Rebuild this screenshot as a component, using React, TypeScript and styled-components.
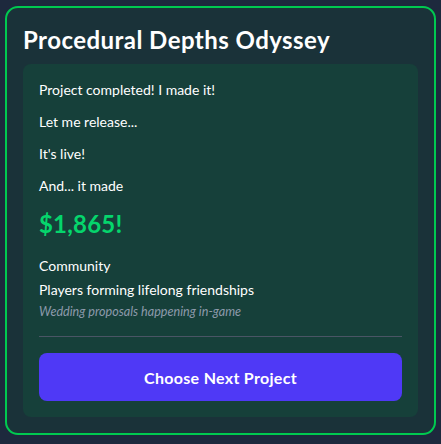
import React from "react";
import styled, { createGlobalStyle } from "styled-components";

const GlobalStyle = createGlobalStyle`
  html, body {
    margin: 0;
    padding: 0;
    background: #1d293d;
  }
  body {
    font-family: Lato, "Noto Sans", sans-serif;
    color: #ffffff;
  }
  * { box-sizing: border-box; }
`;

const Page = styled.div`
  padding: 6px 5px 9px;
`;

const Card = styled.section`
  border: 2px solid #00c950;
  border-radius: 13px;
  background: #1a3239;
  padding: 16px;
`;

const Title = styled.h1`
  margin: 0 0 8px;
  font-size: 24px;
  line-height: 32px;
  font-weight: 700;
  letter-spacing: 0.45px;
  color: #ffffff;
`;

const Panel = styled.div`
  background: #16403a;
  border-radius: 8px;
  padding: 16px;
  display: flex;
  flex-direction: column;
`;

const Line = styled.p`
  margin: 0 0 12px;
  font-size: 14px;
  line-height: 20px;
  color: #ffffff;
`;

const Amount = styled.p`
  margin: 0;
  font-size: 24px;
  line-height: 32px;
  font-weight: 700;
  color: #05d56c;
  letter-spacing: 0.2px;
`;

const Outcome = styled.div`
  margin-top: 16px;
  display: flex;
  flex-direction: column;
  gap: 4px;
`;

const Category = styled.div`
  font-size: 14px;
  line-height: 20px;
  color: #ffffff;
`;

const Detail = styled.div`
  font-size: 14px;
  line-height: 20px;
  color: #ffffff;
`;

const Note = styled.div`
  font-size: 12.6px;
  line-height: 16px;
  font-style: italic;
  color: #8d9aab;
`;

const Divider = styled.hr`
  margin: 16px 0 0;
  border: 0;
  border-top: 1px solid #4a5565;
  height: 0;
`;

const Button = styled.button`
  margin-top: 16px;
  height: 48px;
  width: 100%;
  border: 0;
  border-radius: 8px;
  background: #4f39f6;
  color: #ffffff;
  font-family: inherit;
  font-size: 16px;
  font-weight: 700;
  letter-spacing: 0.3px;
  cursor: pointer;
`;

const lines = [
  "Project completed! I made it!",
  "Let me release...",
  "It's live!",
  "And... it made",
];

export default function App() {
  return (
    <>
      <GlobalStyle />
      <Page>
        <Card>
          <Title>Procedural Depths Odyssey</Title>
          <Panel>
            {lines.map((l) => (
              <Line key={l}>{l}</Line>
            ))}
            <Amount>$1,865!</Amount>
            <Outcome>
              <Category>Community</Category>
              <Detail>Players forming lifelong friendships</Detail>
              <Note>Wedding proposals happening in-game</Note>
            </Outcome>
            <Divider />
            <Button>Choose Next Project</Button>
          </Panel>
        </Card>
      </Page>
    </>
  );
}
